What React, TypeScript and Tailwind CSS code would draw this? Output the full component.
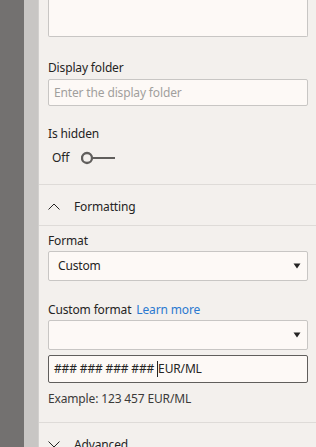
function Caret() {
  return (
    <svg width="8" height="6" viewBox="0 0 8 6" className="shrink-0">
      <path d="M0.5 0.5 H7.5 L4 5.5 Z" fill="#252423" />
    </svg>
  )
}

function Chevron({ up }: { up?: boolean }) {
  return (
    <svg width="12" height="7" viewBox="0 0 12 7" className="shrink-0">
      <polyline
        points={up ? "0.5,6.5 6,1 11.5,6.5" : "0.5,0.5 6,6 11.5,0.5"}
        fill="none"
        stroke="#252423"
        strokeWidth="1"
      />
    </svg>
  )
}

function Label({ children }: { children: React.ReactNode }) {
  return <div className="h-4 text-[12px] leading-4 text-[#252423]">{children}</div>
}

export default function App() {
  return (
    <div
      className="flex h-[447px] w-[316px] overflow-hidden tracking-[-0.15px]"
      style={{ fontFamily: '"Noto Sans", "Open Sans", sans-serif' }}
    >
      <div className="w-[24px] shrink-0 bg-[#737170]" />
      <div className="w-[15px] shrink-0 border-r border-[#d2d0ce] bg-[#c8c6c4]" />
      <div className="flex-1 bg-[#f3f0ed]">
        <div className="pl-[9px] pr-[8px]">
          <div className="h-[37px] rounded-b-[2px] border border-t-0 border-[#c8c6c4] bg-[#fdf9f6]" />

          <div className="mt-[23px]">
            <Label>Display folder</Label>
          </div>
          <div className="mt-[3px] flex h-[27px] items-center rounded-[2px] border border-[#c8c6c4] bg-[#fdf9f6] px-[5px] text-[12px] text-[#a19f9d]">
            Enter the display folder
          </div>

          <div className="mt-[20px]">
            <Label>Is hidden</Label>
          </div>
          <div className="mt-[8px] flex h-4 items-center pl-[4px] text-[12px] text-[#252423]">
            <span>Off</span>
            <svg width="40" height="16" viewBox="0 0 40 16" className="ml-[12px]">
              <circle cx="6" cy="8" r="5" fill="none" stroke="#605e5c" strokeWidth="2.3" />
              <line x1="11" y1="8" x2="34" y2="8" stroke="#605e5c" strokeWidth="2" />
            </svg>
          </div>
        </div>

        <div className="mt-[18px] border-t border-[#dedbd8]" />
        <div className="flex h-[40px] items-center pl-[9px] pt-[3px] text-[12px] text-[#252423]">
          <Chevron up />
          <span className="ml-[14px]">Formatting</span>
        </div>
        <div className="border-t border-[#dedbd8]" />

        <div className="pl-[9px] pr-[8px]">
          <div className="mt-[7px]">
            <Label>Format</Label>
          </div>
          <div className="mt-[2px] flex h-[30px] items-center justify-between rounded-[2px] border border-[#c8c6c4] bg-[#fdf9f6] pl-[9px] pr-[6px] text-[12px] text-[#252423]">
            <span>Custom</span>
            <Caret />
          </div>

          <div className="mt-[21px] flex h-4 items-center gap-[5px] text-[12px] leading-4">
            <span className="text-[#252423]">Custom format</span>
            <span className="text-[#2b79d0]">Learn more</span>
          </div>
          <div className="mt-[2px] flex h-[30px] items-center justify-end rounded-[2px] border border-[#c8c6c4] bg-[#fdf9f6] pr-[6px]">
            <Caret />
          </div>
          <div className="mt-[5px] flex h-[28px] items-center rounded-[2px] border border-[#605e5c] bg-[#fdf9f6] px-[5px] text-[12px] text-[#252423]">
            <span>### ### ### ###&nbsp;</span>
            <span className="h-[16px] w-px bg-[#252423]" />
            <span>EUR/ML</span>
          </div>
          <div className="mt-[8px] h-4 text-[12px] leading-4 text-[#3b3a39]">Example: 123 457 EUR/ML</div>
        </div>

        <div className="mt-[15px] border-t border-[#dedbd8]" />
        <div className="flex h-[40px] items-center pl-[9px] pt-[3px] text-[12px] text-[#252423]">
          <Chevron />
          <span className="ml-[14px]">Advanced</span>
        </div>
      </div>
    </div>
  )
}
